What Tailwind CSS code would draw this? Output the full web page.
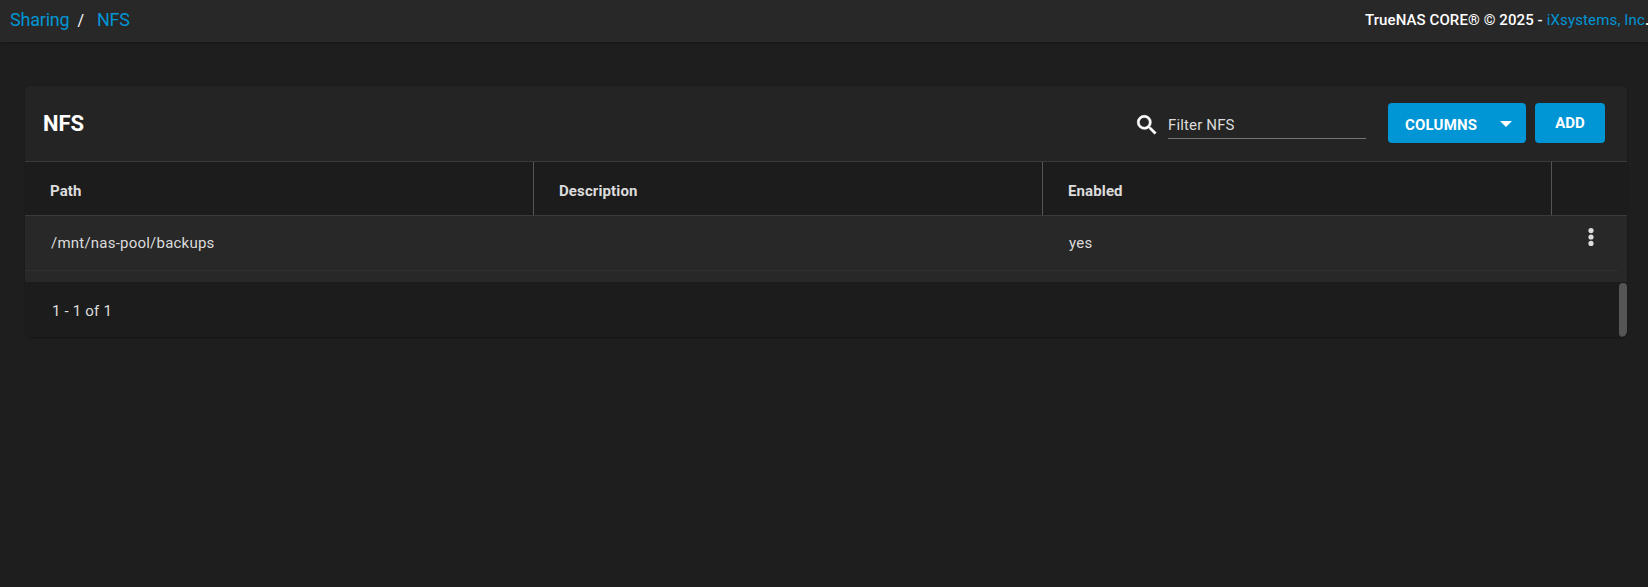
<!DOCTYPE html>
<html lang="en">
<head>
<meta charset="utf-8">
<title>NFS</title>
<script src="https://cdn.jsdelivr.net/npm/@tailwindcss/browser@4"></script>
</head>
<body class="h-screen overflow-hidden bg-[#1e1e1e] font-['Roboto',sans-serif] text-[15px] text-[#dcdcdc]">
  <header class="flex h-[42px] items-center justify-between overflow-hidden bg-[#282828] pl-[10px] leading-5 text-white shadow-[0_1px_3px_rgba(0,0,0,0.3)]">
    <nav class="flex items-center whitespace-nowrap pb-[2px] text-lg tracking-[-0.2px] text-[#0095d5]">
      <a>Sharing</a><span class="ml-[8px] mt-[2px] text-base text-white">/</span><a class="ml-[13px]">NFS</a>
    </nav>
    <div class="w-[283px] shrink-0 whitespace-nowrap pb-[2px] font-medium tracking-[0.09px]">TrueNAS CORE® © 2025 - <a class="font-normal tracking-[0.15px] text-[#0095d5]">iXsystems, Inc</a>.</div>
  </header>
  <main class="pl-[25px] pr-[21px] pt-11">
    <section class="overflow-hidden rounded-md bg-[#282828] shadow-[0_1px_2px_rgba(0,0,0,0.3)]">
      <div class="flex h-[76px] items-start border-b border-[#3a3a3a] bg-[#242424] pl-[18px] pr-[22px] pt-[17px]">
        <h1 class="mt-[7px] flex-1 text-[22px] font-bold leading-[28px] tracking-[-0.1px] text-white">NFS</h1>
        <svg class="mr-[8px] mt-[9px] size-[26px] fill-white stroke-white stroke-[0.5]" viewBox="0 0 24 24"><path d="M15.5 14h-.79l-.28-.27A6.471 6.471 0 0 0 16 9.5 6.5 6.5 0 1 0 9.5 16c1.61 0 3.09-.59 4.23-1.57l.27.28v.79l5 4.99L20.49 19l-4.99-5zm-6 0C7.01 14 5 11.99 5 9.5S7.01 5 9.5 5 14 7.01 14 9.5 11.99 14 9.5 14z"/></svg>
        <div class="mr-[22px] h-[36px] w-[198px] border-b border-[#777] pt-[12px] leading-5 tracking-[0.15px]">Filter NFS</div>
        <button class="mr-[9px] flex h-10 w-[138px] items-center justify-between rounded bg-[#0095d5] pl-[17px] pr-[14px] pt-[4px] font-bold tracking-[0.2px] text-white">COLUMNS<svg class="mb-[3px] h-[6px] w-[12px] fill-white" viewBox="0 0 12 6"><path d="M0 0h12L6 6z"/></svg></button>
        <button class="h-10 w-[70px] rounded bg-[#0095d5] font-bold text-white">ADD</button>
      </div>
      <div class="grid h-[54px] grid-cols-[509px_509px_509px_1fr] border-b border-[#3a3a3a] bg-[#1c1c1c] font-bold leading-5 tracking-[0.12px]">
        <div class="border-r border-[#555] pl-[25px] pt-[19px]">Path</div>
        <div class="border-r border-[#555] pl-[25px] pt-[19px]">Description</div>
        <div class="border-r border-[#555] pl-[25px] pt-[19px]">Enabled</div>
        <div></div>
      </div>
      <div class="mr-[9px] grid h-[55px] grid-cols-[509px_509px_509px_1fr] border-b border-[#303030] leading-5 tracking-[0.22px]">
        <div class="pl-[26px] pt-[17px]">/mnt/nas-pool/backups</div>
        <div></div>
        <div class="pl-[26px] pt-[17px]">yes</div>
        <div class="flex justify-end pr-[15px] pt-[9px]"><svg class="size-6 fill-[#dcdcdc]" viewBox="0 0 24 24"><circle cx="12" cy="5.6" r="2.6"/><circle cx="12" cy="12" r="2.6"/><circle cx="12" cy="18.4" r="2.6"/></svg></div>
      </div>
      <div class="h-[11px]"></div>
      <footer class="flex h-[55px] justify-between bg-[#1c1c1c] pl-[27px] leading-5 tracking-[0.2px]">
        <span class="pt-[19px]">1 - 1 of 1</span>
        <div class="mt-px w-2 rounded bg-[#555]"></div>
      </footer>
    </section>
  </main>
</body>
</html>
